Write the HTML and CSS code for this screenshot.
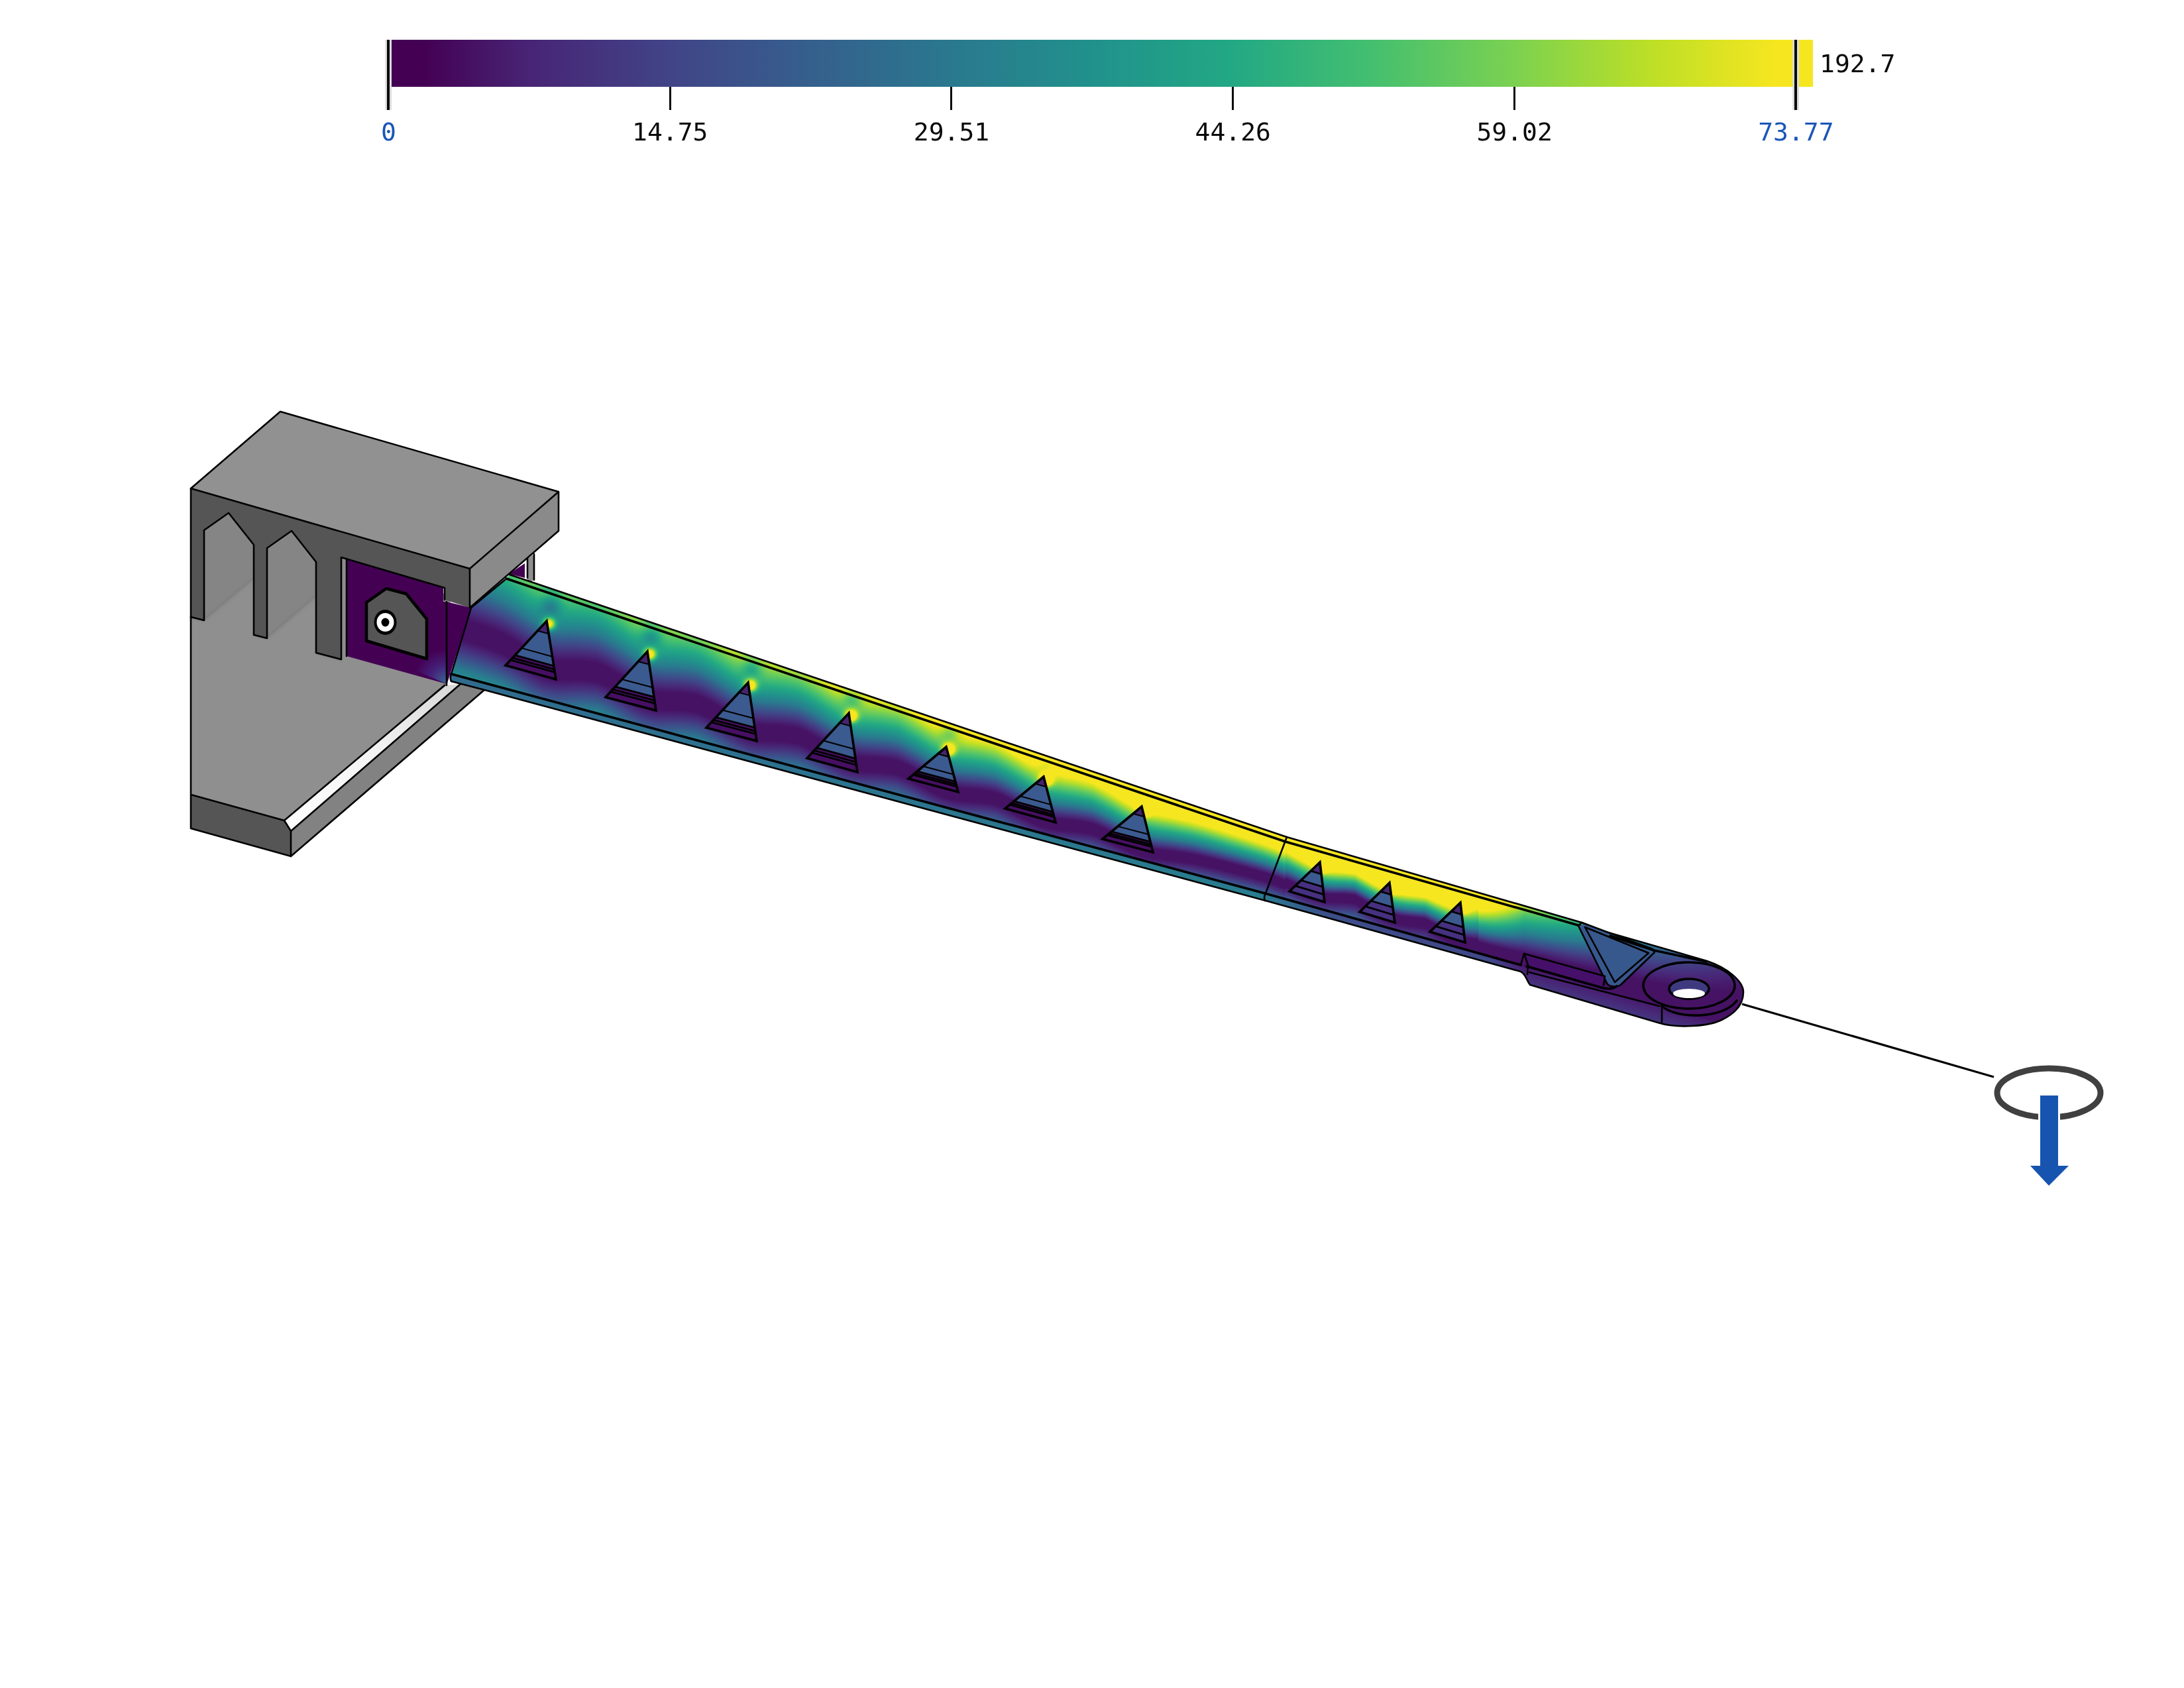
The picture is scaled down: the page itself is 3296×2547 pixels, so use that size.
FILE: index.html
```html
<!DOCTYPE html>
<html lang="en">
<head>
<meta charset="utf-8">
<title>Stress plot</title>
<link rel="stylesheet" href="styles.css">
</head>
<body>
<main class="page">

<svg class="layer" viewBox="0 0 3296 2547" aria-hidden="true">
  <defs>
    <linearGradient id="strip" x1="0" y1="1" x2="1" y2="0">
      <stop offset="0" stop-color="#ffffff"/><stop offset="0.55" stop-color="#f2f2f2"/><stop offset="1" stop-color="#d8d8d8"/>
    </linearGradient>
    <radialGradient id="panelglow" gradientUnits="userSpaceOnUse" cx="672" cy="1028" r="48">
      <stop offset="0" stop-color="#3a5f8f"/><stop offset="0.5" stop-color="#45207a"/><stop offset="1" stop-color="#440154"/>
    </radialGradient>
    <filter id="blur2"><feGaussianBlur stdDeviation="2.2"/></filter>
  </defs>
  <!-- back post -->
  <polygon class="mid" points="796,843 806,836 806,875 796,880"/>
  <polygon class="purple" points="768,866 792,850 792,872"/>
  <path class="ln" d="M796 843V872M806 836V875"/>
  <!-- base side and floor -->
  <polygon class="side" points="439,1254 695,1032 731,1041 439,1292"/>
  <polygon class="white" points="429,1238 439,1254 695,1032 671,1034"/>
  <polygon class="floor" points="288,900 500,820 680,900 674,1034 429,1238 288,1199"/>
  <path class="ln" d="M429 1238L671 1034M439 1254L695 1032M439 1292L731 1041"/>
  <!-- pocket panels -->
  <polygon class="panel" points="308,800 345,774 383,822 383,873 308,936"/>
  <polygon class="panel" points="403,827 440,801 477,848 477,900 403,963"/>
  <path class="soft" d="M308 936L383 873M403 963L477 900M477 985L515 995M383 958L403 963M288 931L308 936"/>
  <polygon class="dark" points="288,737 709,858 709,917 671,905 671,887 515,841 515,995 477,985 477,848 440,801 403,827 403,963 383,958 383,822 345,774 308,800 308,936 288,931"/>
  <polygon class="mid" points="515,841 523,843 523,990 515,995"/>
  <polygon class="purple" points="523,843 669,887 669,908 674,908 674,1032 523,990"/>
  <polygon class="glow" points="600,960 669,940 674,908 674,1032 623,1010"/>
  <polygon class="purple" points="674,908 711,917 679,1018 674,1034"/>
  <!-- recess -->
  <polygon class="hole" points="553,909 583,888 613,896 644,934 644,994 553,967"/>
  <ellipse class="eye-o" cx="581.5" cy="939" rx="17" ry="19"/>
  <ellipse class="eye-w" cx="581.5" cy="939" rx="13" ry="14"/>
  <ellipse class="eye-b" cx="581.5" cy="939" rx="6" ry="6.5"/>
  <!-- edges -->
  <path class="ln" d="M288 931L308 936L308 800L345 774L383 822L383 958L403 963L403 827L440 801L477 848L477 985L515 995L515 841L671 887L671 905M523 843V990M674 908V1034"/>
  <!-- foot -->
  <polygon class="dark" points="288,1199 429,1238 439,1254 439,1292 288,1250"/>
  <path class="ln" d="M288 737V1250L439 1292V1254L429 1238L288 1199"/>
  <!-- top plate -->
  <polygon class="side2" points="709,858 843,742 843,801 709,917"/>
  <polygon class="top" points="423,621 843,742 709,858 288,737"/>
  <path class="ln" d="M288 737L423 621L843 742V801L709 917V858L288 737M709 858L843 742"/>
</svg>

<canvas class="heat" id="heat" width="2000" height="710"></canvas>

<svg class="layer" viewBox="0 0 3296 2547" aria-hidden="true">
  <defs>
    <g id="bigtri">
      <polygon class="band-tip" points="0,0 0.22,0 0,0.22"/>
      <polygon class="band-blue" points="0.22,0 0.78,0 0,0.78 0,0.22"/>
      <polygon class="band-deep" points="0.78,0 1,0 0,1 0,0.78"/>
      <path class="rib" d="M0.22 0L0 0.22M0.61 0L0 0.61"/>
      <path class="rib-thick" d="M0.77 0L0 0.77M0.83 0L0 0.83M0.88 0L0 0.88"/>
      <polygon class="tri" points="0,0 1,0 0,1"/>
    </g>
    <g id="smalltri">
      <polygon class="band-tip" points="0,0 0.3,0 0,0.3"/>
      <polygon class="band-blue" points="0.3,0 0.62,0 0,0.62 0,0.3"/>
      <polygon class="band-low" points="0.62,0 1,0 0,1 0,0.62"/>
      <path class="rib-thick" d="M0.3 0L0 0.3M0.62 0L0 0.62M0.81 0L0 0.81"/>
      <polygon class="tri" points="0,0 1,0 0,1"/>
    </g>
  </defs>

  <use href="#bigtri" transform="matrix(-62 67 14 88 825 937)"/>
  <use href="#bigtri" transform="matrix(-63 69 13 89 977 983)"/>
  <use href="#bigtri" transform="matrix(-63 68 13 88 1129 1030)"/>
  <use href="#bigtri" transform="matrix(-63 68 13 89 1281 1076)"/>
  <use href="#bigtri" transform="matrix(-57 48 18 68 1428 1127)"/>
  <use href="#bigtri" transform="matrix(-58 48 18 69 1575 1172)"/>
  <use href="#bigtri" transform="matrix(-59 49 17 69 1723 1217)"/>
  <use href="#smalltri" transform="matrix(-46 44 7 60 1992 1301)"/>
  <use href="#smalltri" transform="matrix(-45 44 8 60 2097 1332)"/>
  <use href="#smalltri" transform="matrix(-46 44 7 60 2204 1362)"/>

  <!-- arm outline -->
  <path class="ln" d="M769 867L1942 1263L2387 1392L2420 1405L2576 1450C2606 1460 2631 1480 2631 1497C2631 1515 2620 1528 2600 1538C2580 1549 2530 1552 2502 1543L2309 1486C2303 1478 2303 1470 2295 1466L1910 1359L731 1041L681 1028"/>
  <path class="ln-b" d="M764 873L1940 1270L2385 1397M681 1017L1909 1348L2295 1456"/>
  <path class="ln" d="M711 917L681 1017C679 1022 680 1026 681 1028M1942 1263L1910 1348C1907 1352 1908 1356 1909 1359M711 917L762 875"/>

  <!-- cut-out near the lug -->
  <polygon class="insert" points="2382,1397 2394,1394 2494,1437 2442,1488 2428,1486"/>
  <path class="ln" d="M2382 1397L2387 1392L2494 1432L2497 1437L2446 1486C2440 1490 2430 1490 2425 1484L2382 1397M2392 1399L2488 1438L2437 1482L2392 1399"/>
  <path class="ln-b" d="M2430 1412L2496 1434L2576 1451"/>

  <!-- clevis tab -->
  <polygon class="tab" points="2300,1439 2422,1473 2420,1490 2303,1458"/>
  <path class="ln" d="M2295 1456L2300 1439L2422 1473L2420 1487"/>
  <path class="ln-b" d="M2304 1458L2420 1491C2430 1493 2436 1491 2440 1488"/>
  <path class="ln" d="M2300 1439L2306 1456L2305 1470"/>
  <path class="ln" d="M2308 1467L2504 1518"/>

  <!-- lug -->
  <ellipse class="ln-b" cx="2549" cy="1487" rx="69" ry="35"/>
  <ellipse class="lug-hole" cx="2549" cy="1492" rx="30" ry="15"/>
  <ellipse class="lug-white" cx="2549" cy="1499" rx="24" ry="7"/>
  <path class="ln-b" d="M2508 1518C2530 1538 2600 1538 2621 1510"/>
  <path class="ln" d="M2508 1518L2508 1542"/>

  <!-- load: cable, ring and arrow -->
  <path class="cable" d="M2629 1515L3009 1625"/>
  <ellipse class="ring" cx="3092" cy="1649" rx="78" ry="37"/>
  <rect class="arrow-gap" x="3076" y="1670" width="33" height="30"/>
  <polygon class="arrow" points="3079,1653 3106,1653 3106,1759 3122,1759 3092,1789 3064,1759 3079,1759"/>
</svg>

<section class="colorbar">
  <div class="bar-row">
    <div class="bar"></div>
    <span class="max">192.7</span>
  </div>
  <div class="ticks">
    <i class="tick end"></i><i class="tick"></i><i class="tick"></i><i class="tick"></i><i class="tick"></i><i class="tick end"></i>
  </div>
  <div class="labels">
    <span class="limit">0</span><span>14.75</span><span>29.51</span><span>44.26</span><span>59.02</span><span class="limit">73.77</span>
  </div>
</section>

</main>
<script src="script.js"></script>
</body>
</html>
```

FILE: styles.css
```css
html, body { margin: 0; background: #ffffff; }

.page {
  display: grid;
  width: 3296px;
  height: 2547px;
  overflow: hidden;
  font-family: "DejaVu Sans Mono", "Liberation Mono", monospace;
  font-size: 38px;
  line-height: 44px;
  color: #0a0a0a;
}
.layer, .heat, .colorbar { grid-area: 1 / 1; }
.layer { width: 3296px; height: 2547px; display: block; }
.heat { margin: 850px 0 0 660px; width: 2000px; height: 710px; display: block; }

/* colour scale */
.colorbar { align-self: start; padding: 60px 0 0 374px; }
.bar-row { display: flex; align-items: center; gap: 10px; margin-left: 217px; }
.bar {
  width: 2145px;
  height: 71px;
  background: linear-gradient(90deg,
    #440154 0, #440154 50px, #482475 207px, #414487 419px, #355f8d 631px,
    #2a788e 843px, #21918c 1055px, #22a884 1267px, #44bf70 1478px,
    #7ad151 1690px, #bddf26 1902px, #f6e620 2090px, #f6e620 2145px);
}
.ticks {
  display: grid;
  grid-template-columns: repeat(6, 424.8px);
  grid-template-rows: 35px;
  justify-items: center;
  align-items: end;
  height: 35px;
}
.tick { display: block; width: 3px; height: 35px; background: #0a0a0a; }
.tick.end {
  height: 106px;
  width: 4px;
  box-shadow: 0 0 0 3px #dcdcdc;
  clip-path: inset(0 -3px 0 -3px);
  z-index: 1;
}
.labels {
  display: grid;
  grid-template-columns: repeat(6, 424.8px);
  justify-items: center;
  margin-top: 11px;
}
.limit { color: #1a56b8; }

/* bracket */
.ln { fill: none; stroke: #000; stroke-width: 2.6; stroke-linejoin: round; stroke-linecap: round; }
.ln-b { fill: none; stroke: #000; stroke-width: 3.6; stroke-linecap: round; stroke-linejoin: round; }
.soft { fill: none; stroke: #6a6a6a; stroke-width: 2; opacity: 0.55; filter: url(#blur2); }
.top { fill: #919191; }
.side2 { fill: #8a8a8a; }
.dark { fill: #555555; }
.mid { fill: #8e8e8e; }
.side { fill: #828282; }
.floor { fill: #8f8f8f; }
.panel { fill: #858585; }
.white { fill: url(#strip); }
.purple { fill: #440154; }
.glow { fill: url(#panelglow); }
.hole { fill: #555555; stroke: #000; stroke-width: 4.5; stroke-linejoin: round; }
.eye-o { fill: #000; }
.eye-w { fill: #ffffff; }
.eye-b { fill: #000; }

/* triangular openings in the arm */
.tri { fill: none; stroke: #000; stroke-width: 3.6; stroke-linejoin: miter; vector-effect: non-scaling-stroke; }
.rib { fill: none; stroke: #000; stroke-width: 2; vector-effect: non-scaling-stroke; }
.rib-thick { fill: none; stroke: #000; stroke-width: 2.8; vector-effect: non-scaling-stroke; }
.band-tip { fill: #45246f; }
.band-blue { fill: #3b5a8f; }
.band-deep { fill: #470f63; }
.band-low { fill: #46307f; }

/* lug */
.insert { fill: #37588c; }
.tab { fill: #46106a; }
.lug-hole { fill: #3f3a80; stroke: #000; stroke-width: 3.6; }
.lug-white { fill: #ffffff; }

/* load */
.cable { fill: none; stroke: #000; stroke-width: 3.2; }
.ring { fill: none; stroke: #404040; stroke-width: 9; }
.arrow-gap { fill: #ffffff; }
.arrow { fill: #1654b0; }
```

FILE: script.js
```js
// Paints the stress field of the arm (viridis scale) onto the canvas.
(function () {
  var OX = 660, OY = 850, W = 2000, H = 710;
  var canvas = document.getElementById('heat');
  var ctx = canvas.getContext('2d');

  var VIR = [[68,1,84],[72,36,117],[65,68,135],[53,95,141],[42,120,142],[33,145,140],[34,168,132],[68,191,112],[122,209,81],[189,223,38],[246,230,32]];
  function viridis(t) {
    t = Math.max(0, Math.min(1, t)) * 10;
    var i = Math.min(9, Math.floor(t)), f = t - i, a = VIR[i], b = VIR[i + 1];
    return [a[0] + (b[0] - a[0]) * f, a[1] + (b[1] - a[1]) * f, a[2] + (b[2] - a[2]) * f];
  }
  function table(pts, x) {
    if (x <= pts[0][0]) return pts[0][1];
    for (var i = 1; i < pts.length; i++) {
      if (x <= pts[i][0]) {
        var f = (x - pts[i - 1][0]) / (pts[i][0] - pts[i - 1][0]);
        return pts[i - 1][1] + (pts[i][1] - pts[i - 1][1]) * f;
      }
    }
    return pts[pts.length - 1][1];
  }

  var apexes = [[825,937],[977,983],[1129,1030],[1281,1076],[1428,1127],[1575,1172],[1723,1217],[1992,1301],[2097,1332],[2204,1362]];
  var V0 = [[700,.7],[1000,.72],[1360,.78],[1781,.86],[1940,.8],[2029,.72],[2250,.85],[2650,.85]];
  var K = [[700,1.05],[800,1.05],[1000,1.15],[1360,1.3],[1600,1.5],[1781,1.75],[1940,1.9],[2029,2.4],[2150,2.4],[2210,1.9],[2300,.95],[2450,.5],[2650,.15]];
  var K2 = [[700,1.15],[1900,1.15],[2300,.7],[2650,.3]];
  var LIP = [[700,.34],[1900,.4],[2000,.22],[2250,.2],[2300,.07],[2500,.07]];

  function top(x) { return x < 1940 ? 873 + (x - 764) * 0.3376 : 1270 + (x - 1940) * 0.2854; }
  function bot(x) { return x < 1909 ? 1017 + (x - 681) * 0.2695 : 1348 + (x - 1909) * 0.285; }

  function soften(s) {
    return s < 0.4 ? Math.pow(s, 1.5) / Math.sqrt(0.4) : s;
  }

  function apexBoost(x, y, near, v) {
    if (x >= 2260) return 0;
    var dx = x - near[0], dy = y - near[1];
    var ax = dx - 3, ay = dy - 4;
    var b = 0.65 * Math.exp(-(ax * ax + ay * ay) / (2 * 6.5 * 6.5));
    var nx = dx - 6, ny = dy + 24;
    if (v > 0) b -= 0.2 * Math.exp(-(nx * nx + ny * ny) / (2 * 11 * 11));
    else b -= 0.15 * Math.exp(-(nx * nx) / (2 * 14 * 14));
    return b;
  }

  function stress(x, y) {
    var T = top(x), B = bot(x), v = (y - T) / (B - T);
    var dmin = 1e9, i, near = apexes[0];
    for (i = 0; i < apexes.length; i++) {
      var d = Math.abs(apexes[i][0] - x);
      if (d < dmin) { dmin = d; near = apexes[i]; }
    }
    var arch = 1 - Math.exp(-(dmin * dmin) / (50 * 50));
    var amp = x < 1940 ? 0.12 : 0.16;
    var n = table(V0, x) - amp * arch * (x > 2230 ? 0 : 1);
    var k = table(K, x), s;
    var vc = Math.max(v, 0);
    if (v > 1) return table(LIP, x) + (v - 1) * 0.3;
    if (vc < n) {
      s = k * (n - vc);
      if (v < 0) s += 0.05;
    } else {
      s = table(K2, x) * (vc - n);
    }
    s = soften(Math.max(0, s));
    return Math.max(0.05, s + apexBoost(x, y, near, v));
  }

  var off = document.createElement('canvas');
  off.width = W; off.height = H;
  var octx = off.getContext('2d');
  var img = octx.createImageData(W, H), data = img.data, p = 0;
  for (var py = 0; py < H; py++) {
    for (var px = 0; px < W; px++) {
      var c = viridis(stress(px + OX, py + OY));
      data[p++] = c[0]; data[p++] = c[1]; data[p++] = c[2]; data[p++] = 255;
    }
  }
  octx.putImageData(img, 0, 0);

  var outline = new Path2D('M' + (711 - OX) + ' ' + (917 - OY) +
    ' L' + (762 - OX) + ' ' + (875 - OY) +
    ' L' + (769 - OX) + ' ' + (867 - OY) +
    ' L' + (1942 - OX) + ' ' + (1263 - OY) +
    ' L' + (2387 - OX) + ' ' + (1392 - OY) +
    ' L' + (2420 - OX) + ' ' + (1405 - OY) +
    ' L' + (2576 - OX) + ' ' + (1450 - OY) +
    ' C' + (2606 - OX) + ' ' + (1460 - OY) + ' ' + (2631 - OX) + ' ' + (1480 - OY) + ' ' + (2631 - OX) + ' ' + (1497 - OY) +
    ' C' + (2631 - OX) + ' ' + (1515 - OY) + ' ' + (2620 - OX) + ' ' + (1528 - OY) + ' ' + (2600 - OX) + ' ' + (1538 - OY) +
    ' C' + (2580 - OX) + ' ' + (1549 - OY) + ' ' + (2530 - OX) + ' ' + (1552 - OY) + ' ' + (2502 - OX) + ' ' + (1543 - OY) +
    ' L' + (2309 - OX) + ' ' + (1486 - OY) +
    ' C' + (2303 - OX) + ' ' + (1478 - OY) + ' ' + (2303 - OX) + ' ' + (1470 - OY) + ' ' + (2295 - OX) + ' ' + (1466 - OY) +
    ' L' + (1910 - OX) + ' ' + (1359 - OY) +
    ' L' + (731 - OX) + ' ' + (1041 - OY) +
    ' L' + (681 - OX) + ' ' + (1028 - OY) +
    ' L' + (681 - OX) + ' ' + (1017 - OY) + ' Z');
  ctx.save();
  ctx.clip(outline);
  ctx.drawImage(off, 0, 0);
  ctx.restore();
})();
```
